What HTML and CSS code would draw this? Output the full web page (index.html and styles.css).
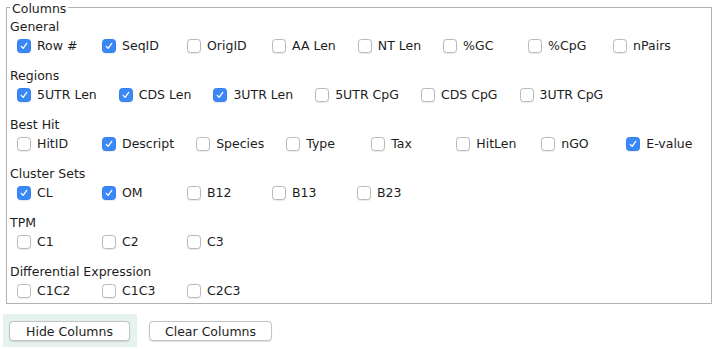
FILE: index.html
```html
<!DOCTYPE html>
<html lang="en">
<head>
    <meta charset="UTF-8">
    <title>Columns</title>
    <link rel="stylesheet" href="styles.css">
</head>
<body>
    <div class="page">
        <fieldset class="columns">
            <legend>Columns</legend>

            <div class="section">
                <div class="section-title">General</div>
                <div class="row">
                    <label class="item"><span class="box on"><svg viewBox="0 0 14 14"><path d="M3.8 7.4 L6 9.8 L10.2 3.9"/></svg></span>Row #</label>
                    <label class="item"><span class="box on"><svg viewBox="0 0 14 14"><path d="M3.8 7.4 L6 9.8 L10.2 3.9"/></svg></span>SeqID</label>
                    <label class="item"><span class="box"></span>OrigID</label>
                    <label class="item"><span class="box"></span>AA Len</label>
                    <label class="item"><span class="box"></span>NT Len</label>
                    <label class="item"><span class="box"></span>%GC</label>
                    <label class="item"><span class="box"></span>%CpG</label>
                    <label class="item"><span class="box"></span>nPairs</label>
                </div>
            </div>

            <div class="section">
                <div class="section-title">Regions</div>
                <div class="row">
                    <label class="item"><span class="box on"><svg viewBox="0 0 14 14"><path d="M3.8 7.4 L6 9.8 L10.2 3.9"/></svg></span>5UTR Len</label>
                    <label class="item"><span class="box on"><svg viewBox="0 0 14 14"><path d="M3.8 7.4 L6 9.8 L10.2 3.9"/></svg></span>CDS Len</label>
                    <label class="item"><span class="box on"><svg viewBox="0 0 14 14"><path d="M3.8 7.4 L6 9.8 L10.2 3.9"/></svg></span>3UTR Len</label>
                    <label class="item"><span class="box"></span>5UTR CpG</label>
                    <label class="item"><span class="box"></span>CDS CpG</label>
                    <label class="item"><span class="box"></span>3UTR CpG</label>
                </div>
            </div>

            <div class="section">
                <div class="section-title">Best Hit</div>
                <div class="row">
                    <label class="item"><span class="box"></span>HitID</label>
                    <label class="item"><span class="box on"><svg viewBox="0 0 14 14"><path d="M3.8 7.4 L6 9.8 L10.2 3.9"/></svg></span>Descript</label>
                    <label class="item"><span class="box"></span>Species</label>
                    <label class="item"><span class="box"></span>Type</label>
                    <label class="item"><span class="box"></span>Tax</label>
                    <label class="item"><span class="box"></span>HitLen</label>
                    <label class="item"><span class="box"></span>nGO</label>
                    <label class="item"><span class="box on"><svg viewBox="0 0 14 14"><path d="M3.8 7.4 L6 9.8 L10.2 3.9"/></svg></span>E-value</label>
                </div>
            </div>

            <div class="section">
                <div class="section-title">Cluster Sets</div>
                <div class="row">
                    <label class="item"><span class="box on"><svg viewBox="0 0 14 14"><path d="M3.8 7.4 L6 9.8 L10.2 3.9"/></svg></span>CL</label>
                    <label class="item"><span class="box on"><svg viewBox="0 0 14 14"><path d="M3.8 7.4 L6 9.8 L10.2 3.9"/></svg></span>OM</label>
                    <label class="item"><span class="box"></span>B12</label>
                    <label class="item"><span class="box"></span>B13</label>
                    <label class="item"><span class="box"></span>B23</label>
                </div>
            </div>

            <div class="section">
                <div class="section-title">TPM</div>
                <div class="row">
                    <label class="item"><span class="box"></span>C1</label>
                    <label class="item"><span class="box"></span>C2</label>
                    <label class="item"><span class="box"></span>C3</label>
                </div>
            </div>

            <div class="section">
                <div class="section-title">Differential Expression</div>
                <div class="row">
                    <label class="item"><span class="box"></span>C1C2</label>
                    <label class="item"><span class="box"></span>C1C3</label>
                    <label class="item"><span class="box"></span>C2C3</label>
                </div>
            </div>
        </fieldset>

        <div class="actions">
            <div class="focus"><button class="btn btn-hide">Hide Columns</button></div>
            <button class="btn btn-clear">Clear Columns</button>
        </div>
    </div>
</body>
</html>
```

FILE: styles.css
```css
body { margin: 0; background: #ffffff; color: #1d1d1d; font-family: "DejaVu Sans", sans-serif; font-size: 12.5px; }
.page { padding: 0 0 0 6px; }

.columns { box-sizing: border-box; width: 706px; margin: 0; min-width: 0; padding: 4px 3px 5px 3px; border: 1px solid #b2b2b2; display: flex; flex-direction: column; gap: 14px; overflow: hidden; }
.columns legend { padding: 4px 2px 0 2px; line-height: 10px; }

.section-title { height: 18px; line-height: 18px; }
.row { display: flex; padding: 3px 0 0 7px; }
.item { display: flex; align-items: center; min-width: 85px; padding-right: 22px; box-sizing: border-box; height: 14px; line-height: 14px; white-space: nowrap; flex-shrink: 0; }
.item:last-child { padding-right: 0; }

.box { width: 14px; height: 14px; box-sizing: border-box; margin-right: 6px; border: 1px solid #b9b9b9; border-radius: 3.5px; background: #ffffff; box-shadow: 0 0.5px 1px rgba(0, 0, 0, 0.08); flex-shrink: 0; }
.box.on { background: #3a87f6; border-color: #3380f2; }
.box svg { display: block; width: 12px; height: 12px; }
.box svg path { fill: none; stroke: #ffffff; stroke-width: 1.5; stroke-linecap: round; stroke-linejoin: round; }

.actions { display: flex; align-items: flex-start; margin-top: 10px; margin-left: -3px; }
.focus { background: #e6f3ed; padding: 7px 7px 6px 6px; }
.btn { font-family: "DejaVu Sans", sans-serif; font-size: 12.5px; color: #1d1d1d; background: #ffffff; border: 1px solid #c3c3c3; border-radius: 4px; height: 20px; padding: 0; box-shadow: 0 0.5px 1px rgba(0, 0, 0, 0.12); }
.btn-hide { width: 121px; }
.btn-clear { width: 123px; margin-left: 12px; margin-top: 7px; }
```
